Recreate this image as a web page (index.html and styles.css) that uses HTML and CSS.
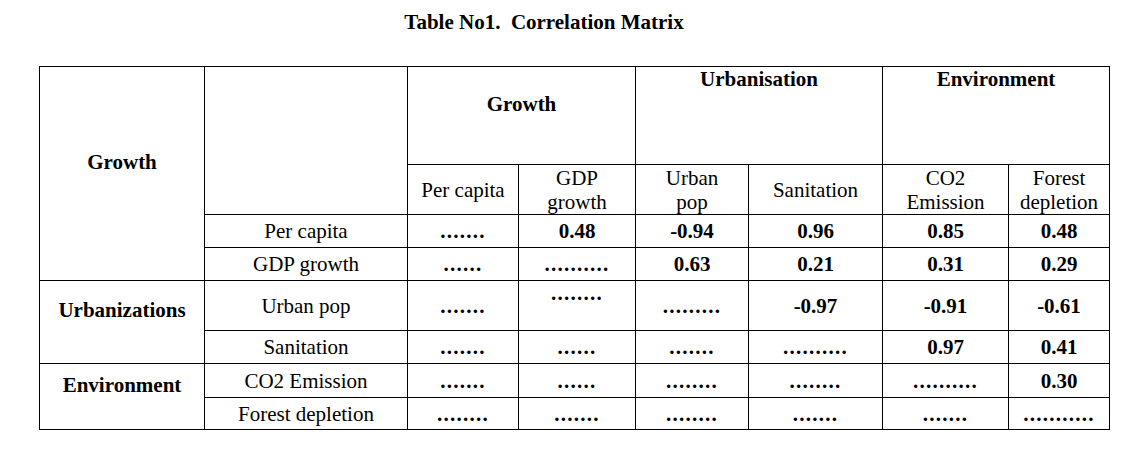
FILE: index.html
```html
<!DOCTYPE html>
<html lang="en">
<head>
<meta charset="utf-8">
<title>Table No1. Correlation Matrix</title>
<link rel="stylesheet" href="styles.css">
</head>
<body>
<h1 class="title">Table No1.&nbsp; Correlation Matrix</h1>
<div class="matrix">
  <div class="cell grp r4">Growth</div>
  <div class="cell r2"></div>
  <div class="cell hd c2">Growth</div>
  <div class="cell hd-top c2">Urbanisation</div>
  <div class="cell hd-top c2">Environment</div>

  <div class="cell">Per capita</div>
  <div class="cell">GDP<br>growth</div>
  <div class="cell">Urban<br>pop</div>
  <div class="cell">Sanitation</div>
  <div class="cell">CO2<br>Emission</div>
  <div class="cell">Forest<br>depletion</div>

  <div class="cell">Per capita</div>
  <div class="cell dots">.......</div>
  <div class="cell val">0.48</div>
  <div class="cell val">-0.94</div>
  <div class="cell val">0.96</div>
  <div class="cell val">0.85</div>
  <div class="cell val">0.48</div>

  <div class="cell">GDP growth</div>
  <div class="cell dots">......</div>
  <div class="cell dots">..........</div>
  <div class="cell val">0.63</div>
  <div class="cell val">0.21</div>
  <div class="cell val">0.31</div>
  <div class="cell val">0.29</div>

  <div class="cell grp r2">Urbanizations</div>
  <div class="cell">Urban pop</div>
  <div class="cell dots">.......</div>
  <div class="cell dots top">........</div>
  <div class="cell dots">.........</div>
  <div class="cell val">-0.97</div>
  <div class="cell val">-0.91</div>
  <div class="cell val">-0.61</div>

  <div class="cell">Sanitation</div>
  <div class="cell dots">.......</div>
  <div class="cell dots">......</div>
  <div class="cell dots">.......</div>
  <div class="cell dots">..........</div>
  <div class="cell val">0.97</div>
  <div class="cell val">0.41</div>

  <div class="cell grp r2">Environment</div>
  <div class="cell">CO2 Emission</div>
  <div class="cell dots">.......</div>
  <div class="cell dots">......</div>
  <div class="cell dots">........</div>
  <div class="cell dots">........</div>
  <div class="cell dots">..........</div>
  <div class="cell val">0.30</div>

  <div class="cell">Forest depletion</div>
  <div class="cell dots">........</div>
  <div class="cell dots">.......</div>
  <div class="cell dots">........</div>
  <div class="cell dots">.......</div>
  <div class="cell dots">.......</div>
  <div class="cell dots">...........</div>
</div>
</body>
</html>
```
FILE: styles.css
```css
html, body {
  margin: 0;
  padding: 0;
  background: #fff;
}

body {
  font-family: "Liberation Serif", "Times New Roman", serif;
  font-size: 21px;
  color: #000;
}

.title {
  margin: 10px 0 0 0;
  width: 1088px;
  height: 24px;
  line-height: 24px;
  font-size: 21px;
  font-weight: bold;
  text-align: center;
}

.matrix {
  display: inline-grid;
  margin: 32px 0 0 39px;
  grid-template-columns: 164px 202px 110px 116px 112px 133px 125px 100px;
  grid-template-rows: 97px 49px 32px 32px 49px 32px 33px 31px;
  gap: 1px;
  padding: 1px;
  background: #000;
}

.cell {
  background: #fff;
  display: flex;
  align-items: center;
  justify-content: center;
  text-align: center;
  line-height: 24px;
}

.r4 { grid-row: span 4; }
.r2 { grid-row: span 2; }
.c2 { grid-column: span 2; }

.grp,
.hd {
  font-weight: bold;
  padding-bottom: 24px;
}

.hd-top {
  font-weight: bold;
  align-items: flex-start;
}

.val {
  font-weight: bold;
}

.dots {
  font-weight: bold;
  letter-spacing: 1.25px;
}

.top {
  align-items: flex-start;
}
```
